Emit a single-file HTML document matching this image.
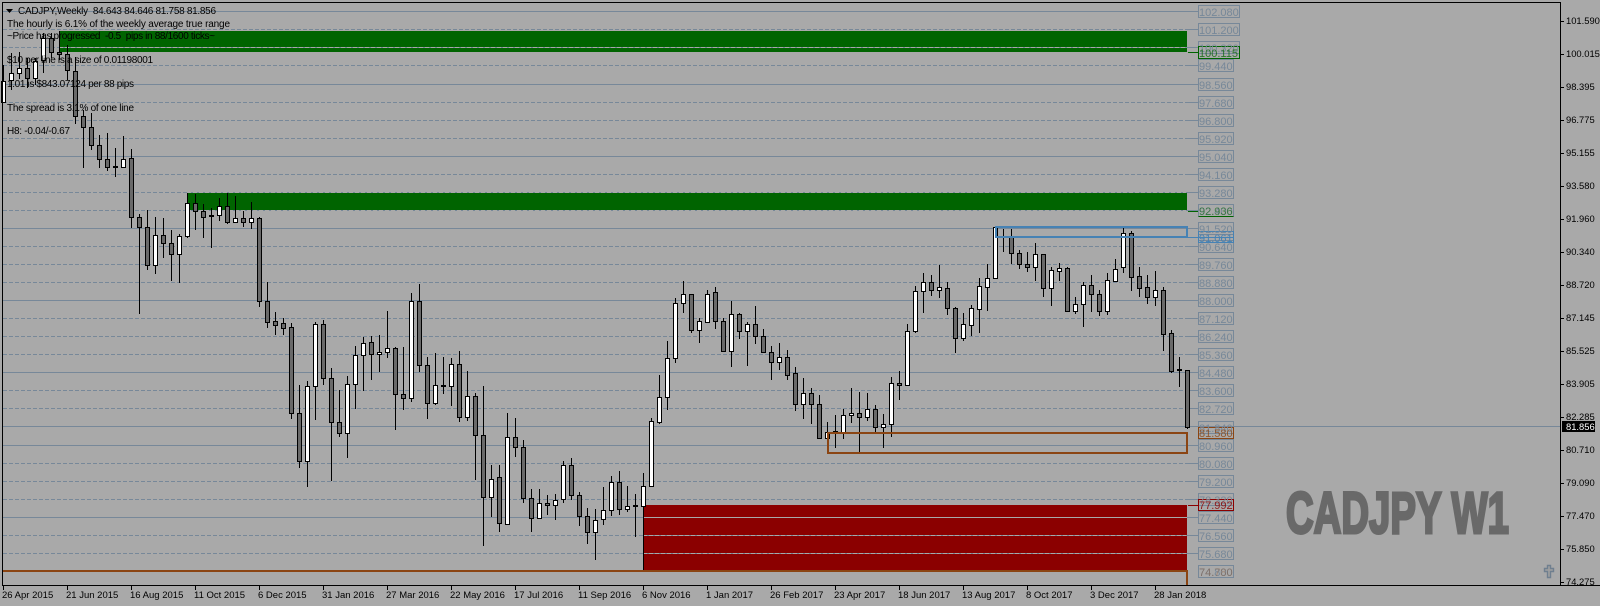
<!DOCTYPE html>
<html><head><meta charset="utf-8"><title>CADJPY,Weekly</title>
<style>
html,body{margin:0;padding:0;background:#a9a9a9;width:1600px;height:606px;overflow:hidden}
svg{display:block;font-family:"Liberation Sans",sans-serif}
.l text{font-size:11px;fill:#778899}
.a text{font-size:9.4px;fill:#000}
.b text{font-size:9.5px;fill:#000}
.t text{font-size:10px;fill:#000}
</style></head><body>
<svg width="1600" height="606" viewBox="0 0 1600 606" xmlns="http://www.w3.org/2000/svg" shape-rendering="crispEdges">
<rect width="1600" height="606" fill="#a9a9a9"/>
<!-- zones -->
<rect x="59" y="31" width="1128" height="21" fill="#006400"/>
<rect x="187" y="192" width="1000" height="19" fill="#006400"/>
<rect x="643" y="505" width="544" height="65" fill="#8b0000"/>
<!-- grid solid -->
<path stroke="#778899" fill="none" d="M3 11.5H1198M3 84.5H1198M3 156.5H1198M3 228.5H1198M3 300.5H1198M3 372.5H1198M3 445.5H1198M3 517.5H1198"/>
<!-- grid dashed -->
<path stroke="#778899" fill="none" stroke-dasharray="4 2" d="M3 29.5H1186M3 47.5H1186M3 65.5H1186M3 102.5H1186M3 120.5H1186M3 138.5H1186M3 174.5H1186M3 192.5H1186M3 210.5H1186M3 246.5H1186M3 264.5H1186M3 282.5H1186M3 318.5H1186M3 336.5H1186M3 354.5H1186M3 390.5H1186M3 408.5H1186M3 426.5H1186M3 463.5H1186M3 481.5H1186M3 499.5H1186M3 535.5H1186M3 553.5H1186"/>
<path stroke="#778899" fill="none" d="M1186 29.5H1198M1186 47.5H1198M1186 65.5H1198M1186 102.5H1198M1186 120.5H1198M1186 138.5H1198M1186 174.5H1198M1186 192.5H1198M1186 210.5H1198M1186 246.5H1198M1186 264.5H1198M1186 282.5H1198M1186 318.5H1198M1186 336.5H1198M1186 354.5H1198M1186 390.5H1198M1186 408.5H1198M1186 463.5H1198M1186 481.5H1198M1186 499.5H1198M1186 535.5H1198M1186 553.5H1198"/>
<!-- lines over zones -->
<path stroke="#a9a9a9" fill="none" stroke-dasharray="4 2" d="M59 47.5H1186M643 535.5H1186M643 553.5H1186M187 192.5H1186M187 210.5H1186"/>
<path stroke="#a9a9a9" fill="none" d="M643 517.5H1187"/>
<!-- price line -->
<path stroke="#778899" fill="none" d="M3 426.5H1560"/>
<!-- wicks -->
<path stroke="#000" fill="none" d="M3.5 65V103M11.5 53V90M19.5 52V79M27.5 58V88M35.5 58V85M43.5 33V73M51.5 33V58M59.5 31V60M67.5 45V80M75.5 57V124M83.5 110V168M91.5 113V150M99.5 135V168M107.5 133V171M115.5 148V177M123.5 136V168M131.5 149V228M139.5 214V314M147.5 210V270M155.5 217V274M163.5 218V258M171.5 230V281M179.5 234V283M187.5 193V238M195.5 194V230M203.5 204V238M211.5 208V248M219.5 198V221M227.5 193V224M235.5 196V222M243.5 211V227M251.5 202V229M259.5 217V307M267.5 282V328M275.5 312V335M283.5 318V335M291.5 323V419M299.5 385V468M307.5 381V487M315.5 322V420M323.5 320V385M331.5 368V481M339.5 390V437M347.5 376V458M355.5 346V409M363.5 337V391M371.5 336V380M379.5 335V372M387.5 311V358M395.5 347V430M403.5 347V410M411.5 293V402M419.5 284V372M427.5 357V419M435.5 353V405M443.5 357V394M451.5 358V406M459.5 351V422M467.5 371V421M475.5 393V480M483.5 386V546M491.5 465V517M499.5 465V532M507.5 413V525M515.5 418V457M523.5 440V503M531.5 489V532M539.5 489V519M547.5 495V515M555.5 494V520M563.5 461V503M571.5 458V500M579.5 492V526M587.5 508V544M595.5 509V560M603.5 487V525M611.5 476V516M619.5 471V515M627.5 486V512M635.5 494V537M643.5 473V570M651.5 418V487M659.5 375V424M667.5 341V410M675.5 298V363M683.5 281V313M691.5 294V333M699.5 318V343M707.5 290V322M715.5 287V329M723.5 318V352M731.5 301V367M739.5 313V339M747.5 322V366M755.5 306V344M763.5 329V353M771.5 346V380M779.5 343V370M787.5 350V380M795.5 367V411M803.5 378V419M811.5 388V424M819.5 395V439M827.5 422V440M835.5 415V448M843.5 409V439M851.5 388V423M859.5 392V452M867.5 393V421M875.5 405V432M883.5 414V448M891.5 377V437M899.5 371V400M907.5 324V385M915.5 286V333M923.5 273V313M931.5 275V296M939.5 265V298M947.5 282V315M955.5 307V353M963.5 313V341M971.5 305V336M979.5 278V333M987.5 264V311M995.5 226V279M1003.5 229V252M1011.5 229V264M1019.5 250V269M1027.5 252V272M1035.5 243V281M1043.5 254V297M1051.5 267V306M1059.5 263V281M1067.5 267V312M1075.5 297V314M1083.5 282V327M1091.5 275V312M1099.5 290V316M1107.5 273V315M1115.5 259V281M1123.5 227V273M1131.5 231V291M1139.5 267V297M1147.5 275V304M1155.5 271V306M1163.5 287V351M1171.5 330V373M1179.5 357V387M1187.5 370V429"/>
<!-- white bodies -->
<path fill="#fff" stroke="#000" d="M1.5 81.5h4v21h-4zM9.5 73.5h4v7h-4zM17.5 68.5h4v5h-4zM33.5 61.5h4v17h-4zM41.5 38.5h4v22h-4zM121.5 159.5h4v8h-4zM153.5 235.5h4v30h-4zM177.5 236.5h4v18h-4zM185.5 203.5h4v33h-4zM217.5 206.5h4v9h-4zM233.5 218.5h4v4h-4zM249.5 218.5h4v4h-4zM305.5 386.5h4v75h-4zM313.5 324.5h4v62h-4zM345.5 384.5h4v49h-4zM353.5 355.5h4v29h-4zM361.5 343.5h4v12h-4zM377.5 352.5h4v2h-4zM385.5 348.5h4v4h-4zM409.5 301.5h4v97h-4zM433.5 385.5h4v18h-4zM449.5 364.5h4v22h-4zM465.5 396.5h4v21h-4zM489.5 479.5h4v18h-4zM505.5 437.5h4v87h-4zM537.5 503.5h4v15h-4zM553.5 500.5h4v5h-4zM561.5 465.5h4v34h-4zM593.5 520.5h4v12h-4zM601.5 510.5h4v9h-4zM609.5 482.5h4v28h-4zM625.5 506.5h4v3h-4zM641.5 486.5h4v20h-4zM649.5 421.5h4v65h-4zM657.5 397.5h4v25h-4zM665.5 358.5h4v39h-4zM673.5 303.5h4v55h-4zM681.5 294.5h4v9h-4zM697.5 321.5h4v9h-4zM705.5 294.5h4v28h-4zM729.5 314.5h4v37h-4zM745.5 324.5h4v7h-4zM777.5 357.5h4v5h-4zM801.5 393.5h4v11h-4zM825.5 432.5h4v6h-4zM841.5 415.5h4v17h-4zM849.5 413.5h4v2h-4zM865.5 409.5h4v8h-4zM881.5 424.5h4v3h-4zM889.5 383.5h4v41h-4zM905.5 331.5h4v54h-4zM913.5 291.5h4v40h-4zM921.5 282.5h4v9h-4zM937.5 287.5h4v3h-4zM961.5 324.5h4v14h-4zM969.5 308.5h4v17h-4zM977.5 286.5h4v23h-4zM985.5 278.5h4v9h-4zM993.5 227.5h4v51h-4zM1033.5 254.5h4v13h-4zM1049.5 270.5h4v18h-4zM1057.5 268.5h4v3h-4zM1073.5 304.5h4v7h-4zM1081.5 285.5h4v19h-4zM1105.5 280.5h4v31h-4zM1113.5 269.5h4v12h-4zM1121.5 233.5h4v34h-4zM1153.5 290.5h4v7h-4z"/>
<!-- dark bodies -->
<path fill="#696969" stroke="#000" d="M25.5 68.5h4v10h-4zM49.5 38.5h4v14h-4zM57.5 52.5h4v2h-4zM65.5 54.5h4v16h-4zM73.5 71.5h4v45h-4zM81.5 116.5h4v11h-4zM89.5 127.5h4v18h-4zM97.5 145.5h4v14h-4zM105.5 159.5h4v8h-4zM129.5 158.5h4v59h-4zM137.5 217.5h4v10h-4zM145.5 227.5h4v38h-4zM161.5 235.5h4v8h-4zM169.5 243.5h4v11h-4zM193.5 203.5h4v8h-4zM201.5 211.5h4v6h-4zM225.5 206.5h4v16h-4zM241.5 218.5h4v4h-4zM257.5 218.5h4v83h-4zM265.5 301.5h4v21h-4zM273.5 321.5h4v4h-4zM281.5 323.5h4v5h-4zM289.5 327.5h4v86h-4zM297.5 413.5h4v48h-4zM321.5 324.5h4v54h-4zM329.5 378.5h4v44h-4zM337.5 422.5h4v11h-4zM369.5 342.5h4v12h-4zM393.5 348.5h4v46h-4zM401.5 394.5h4v4h-4zM417.5 301.5h4v64h-4zM425.5 365.5h4v38h-4zM457.5 364.5h4v53h-4zM473.5 396.5h4v39h-4zM481.5 435.5h4v62h-4zM497.5 477.5h4v46h-4zM513.5 437.5h4v10h-4zM521.5 447.5h4v51h-4zM529.5 498.5h4v20h-4zM545.5 503.5h4v2h-4zM569.5 465.5h4v30h-4zM577.5 495.5h4v21h-4zM585.5 516.5h4v16h-4zM617.5 482.5h4v27h-4zM689.5 294.5h4v36h-4zM713.5 292.5h4v29h-4zM721.5 321.5h4v30h-4zM737.5 314.5h4v17h-4zM753.5 324.5h4v12h-4zM761.5 336.5h4v16h-4zM769.5 352.5h4v10h-4zM785.5 357.5h4v18h-4zM793.5 373.5h4v31h-4zM809.5 393.5h4v11h-4zM817.5 404.5h4v34h-4zM857.5 413.5h4v4h-4zM873.5 409.5h4v18h-4zM897.5 383.5h4v2h-4zM929.5 282.5h4v8h-4zM945.5 288.5h4v20h-4zM953.5 308.5h4v30h-4zM1009.5 237.5h4v16h-4zM1017.5 253.5h4v11h-4zM1025.5 264.5h4v3h-4zM1041.5 254.5h4v34h-4zM1065.5 268.5h4v43h-4zM1089.5 285.5h4v9h-4zM1097.5 294.5h4v17h-4zM1129.5 233.5h4v44h-4zM1137.5 276.5h4v12h-4zM1145.5 287.5h4v10h-4zM1161.5 290.5h4v44h-4zM1169.5 333.5h4v38h-4zM1185.5 370.5h4v57h-4z"/>
<!-- dojis -->
<path stroke="#000" stroke-width="2" fill="none" d="M113 167H118M209 216H214M441 386H446M633 506H638M833 432H838M1001 237H1006M1177 370H1182"/>
<!-- boxes -->
<rect x="996" y="227" width="191" height="10" fill="none" stroke="#4682b4" stroke-width="2"/>
<rect x="828" y="433" width="359" height="20" fill="none" stroke="#8b4513" stroke-width="2"/>
<path d="M3 571H1187V585" fill="none" stroke="#8b4513" stroke-width="2"/>
<path d="M1188 52.5H1198M1188 211.5H1198" stroke="#006400" fill="none"/>
<path d="M1187 237.5H1233" stroke="#4682b4" fill="none"/>
<path d="M1188 505.5H1198" stroke="#8b0000" fill="none"/>
<!-- label boxes -->
<path fill="none" stroke="#778899" d="M1198.5 5.5h41v12h-41zM1198.5 23.5h41v12h-41zM1198.5 41.5h41v12h-41zM1198.5 59.5h35v12h-35zM1198.5 78.5h35v12h-35zM1198.5 96.5h35v12h-35zM1198.5 114.5h35v12h-35zM1198.5 132.5h35v12h-35zM1198.5 150.5h35v12h-35zM1198.5 168.5h35v12h-35zM1198.5 186.5h35v12h-35zM1198.5 204.5h35v12h-35zM1198.5 222.5h35v12h-35zM1198.5 240.5h35v12h-35zM1198.5 258.5h35v12h-35zM1198.5 276.5h35v12h-35zM1198.5 294.5h35v12h-35zM1198.5 312.5h35v12h-35zM1198.5 330.5h35v12h-35zM1198.5 348.5h35v12h-35zM1198.5 366.5h35v12h-35zM1198.5 384.5h35v12h-35zM1198.5 402.5h35v12h-35zM1198.5 421.5h35v12h-35zM1198.5 439.5h35v12h-35zM1198.5 457.5h35v12h-35zM1198.5 475.5h35v12h-35zM1198.5 493.5h35v12h-35zM1198.5 511.5h35v12h-35zM1198.5 529.5h35v12h-35zM1198.5 547.5h35v12h-35zM1198.5 565.5h35v12h-35z"/>
<path fill="none" stroke="#006400" d="M1198.5 46.5h41v12h-41zM1198.5 216.5h35"/>
<path fill="none" stroke="#4682b4" d="M1198.5 231.5h35v11h-35z"/>
<path fill="none" stroke="#8b4513" d="M1198.5 427.5h35v11h-35z"/>
<path fill="none" stroke="#8b0000" d="M1198.5 499.5h35v11h-35z"/>
<g shape-rendering="auto">
<g class="l">
<text x="1199" y="16">102.080</text><text x="1199" y="34">101.200</text><text x="1199" y="52">100.320</text><text x="1199" y="70">99.440</text><text x="1199" y="89">98.560</text><text x="1199" y="107">97.680</text><text x="1199" y="125">96.800</text><text x="1199" y="143">95.920</text><text x="1199" y="161">95.040</text><text x="1199" y="179">94.160</text><text x="1199" y="197">93.280</text><text x="1199" y="215">92.400</text><text x="1199" y="233">91.520</text><text x="1199" y="251">90.640</text><text x="1199" y="269">89.760</text><text x="1199" y="287">88.880</text><text x="1199" y="305">88.000</text><text x="1199" y="323">87.120</text><text x="1199" y="341">86.240</text><text x="1199" y="359">85.360</text><text x="1199" y="377">84.480</text><text x="1199" y="395">83.600</text><text x="1199" y="413">82.720</text><text x="1199" y="432">81.840</text><text x="1199" y="450">80.960</text><text x="1199" y="468">80.080</text><text x="1199" y="486">79.200</text><text x="1199" y="504">78.320</text><text x="1199" y="522">77.440</text><text x="1199" y="540">76.560</text><text x="1199" y="558">75.680</text><text x="1199" y="576">74.800</text>
</g>
<g style="font-size:11px">
<text x="1199" y="57" fill="#006400" opacity=".75">100.115</text>
<text x="1199" y="215" fill="#006400" opacity=".55">92.936</text>
<text x="1199" y="242" fill="#4682b4">91.061</text>
<text x="1199" y="437" fill="#8b4513" opacity=".8">81.580</text>
<text x="1199" y="509" fill="#8b0000" opacity=".85">77.992</text>
<text x="1199" y="576" fill="#8b4513" opacity=".35">74.780</text>
</g>
<!-- axis -->
<g shape-rendering="crispEdges"><path stroke="#000" fill="none" d="M2.5 2V585.5M2 2.5H1560.5M1560.5 2V586M2 585.5H1600"/>
<path stroke="#000" fill="none" d="M1560 21.5h4M1560 54.5h4M1560 87.5h4M1560 120.5h4M1560 153.5h4M1560 186.5h4M1560 219.5h4M1560 252.5h4M1560 285.5h4M1560 318.5h4M1560 351.5h4M1560 384.5h4M1560 417.5h4M1560 450.5h4M1560 483.5h4M1560 516.5h4M1560 549.5h4M1560 582.5h4"/>
<path stroke="#000" fill="none" d="M3.5 586v4M67.5 586v4M131.5 586v4M195.5 586v4M259.5 586v4M323.5 586v4M387.5 586v4M451.5 586v4M515.5 586v4M579.5 586v4M643.5 586v4M707.5 586v4M771.5 586v4M835.5 586v4M899.5 586v4M963.5 586v4M1027.5 586v4M1091.5 586v4M1155.5 586v4"/>
<rect x="1562" y="421" width="33" height="11" fill="#000"/></g>
<g class="a">
<text x="1566" y="24">101.590</text><text x="1566" y="57">100.015</text><text x="1566" y="90">98.395</text><text x="1566" y="123">96.775</text><text x="1566" y="156">95.155</text><text x="1566" y="189">93.580</text><text x="1566" y="222">91.960</text><text x="1566" y="255">90.340</text><text x="1566" y="288">88.720</text><text x="1566" y="321">87.145</text><text x="1566" y="354">85.525</text><text x="1566" y="387">83.905</text><text x="1566" y="420">82.285</text><text x="1566" y="453">80.710</text><text x="1566" y="486">79.090</text><text x="1566" y="519">77.470</text><text x="1566" y="552">75.850</text><text x="1566" y="585">74.275</text>
<text x="1566" y="430" style="fill:#fff">81.856</text>
</g>
<g class="b">
<text x="2" y="598">26 Apr 2015</text><text x="66" y="598">21 Jun 2015</text><text x="130" y="598">16 Aug 2015</text><text x="194" y="598">11 Oct 2015</text><text x="258" y="598">6 Dec 2015</text><text x="322" y="598">31 Jan 2016</text><text x="386" y="598">27 Mar 2016</text><text x="450" y="598">22 May 2016</text><text x="514" y="598">17 Jul 2016</text><text x="578" y="598">11 Sep 2016</text><text x="642" y="598">6 Nov 2016</text><text x="706" y="598">1 Jan 2017</text><text x="770" y="598">26 Feb 2017</text><text x="834" y="598">23 Apr 2017</text><text x="898" y="598">18 Jun 2017</text><text x="962" y="598">13 Aug 2017</text><text x="1026" y="598">8 Oct 2017</text><text x="1090" y="598">3 Dec 2017</text><text x="1154" y="598">28 Jan 2018</text>
</g>
<g class="t">
<path d="M6 9h7l-3.5 4z" fill="#000"/>
<text x="18" y="14" textLength="198" lengthAdjust="spacing" xml:space="preserve">CADJPY,Weekly  84.643 84.646 81.758 81.856</text>
<text x="7" y="27" textLength="223" lengthAdjust="spacing">The hourly is 6.1% of the weekly average true range</text>
<text x="7" y="39" textLength="208" lengthAdjust="spacing" xml:space="preserve">~Price has progressed  -0.5  pips in 88/1600 ticks~</text>
<text x="7" y="63" textLength="146" lengthAdjust="spacing">$10 per line is a size of 0.01198001</text>
<text x="7" y="87" textLength="127" lengthAdjust="spacing">1.01 is $843.07124 per 88 pips</text>
<text x="7" y="111" textLength="127" lengthAdjust="spacing">The spread is 3.1% of one line</text>
<text x="7" y="134" textLength="63" lengthAdjust="spacing">H8: -0.04/-0.67</text>
</g>
<text x="1286" y="533" font-size="58" font-weight="bold" fill="#696969" stroke="#696969" stroke-width="3" textLength="223" lengthAdjust="spacingAndGlyphs">CADJPY W1</text>
<path d="M1547.5 565.5h3v3h3v3h-3v6h-3v-6h-3v-3h3z" fill="#a0a0a0" stroke="#6f7f8f" stroke-width="1.4"/>
</g>
</svg>
</body></html>
